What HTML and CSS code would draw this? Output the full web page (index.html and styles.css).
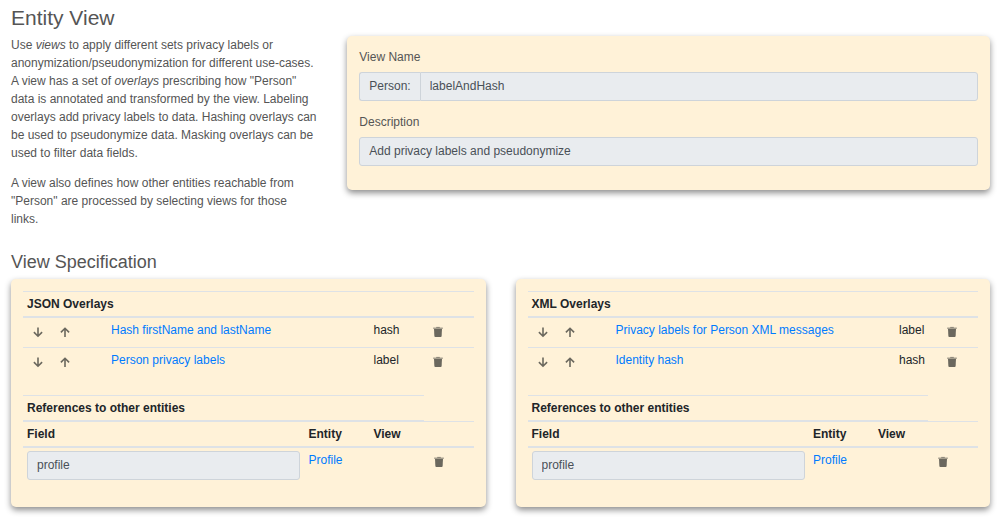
FILE: index.html
```
<!DOCTYPE html>
<html lang="en">
<head>
<meta charset="utf-8">
<meta name="viewport" content="width=device-width, initial-scale=1">
<title>Entity View</title>
<link rel="stylesheet" href="styles.css">
</head>
<body>
<svg class="sprite" aria-hidden="true">
  <symbol id="down" viewBox="0 0 12 12"><path d="M6 1.5V10M1.9 6.1L6 10.2L10.1 6.1" fill="none" stroke="currentColor" stroke-width="1.6"/></symbol>
  <symbol id="up" viewBox="0 0 12 12"><path d="M6 11V2.5M1.9 6.4L6 2.3L10.1 6.4" fill="none" stroke="currentColor" stroke-width="1.6"/></symbol>
  <symbol id="trash" viewBox="0 0 12 12"><path d="M4.2 .9h3.6v.9H4.2z" fill="currentColor" opacity=".8"/><path d="M1.2 1.5h9.6V3H1.2z" fill="currentColor" opacity=".6"/><path d="M2 3h8L9.6 10.2Q9.5 11 8.7 11H3.3Q2.5 11 2.4 10.2z" fill="currentColor"/></symbol>
</svg>
<main class="page">
  <h1>Entity View</h1>
  <section class="grid">
    <div class="intro">
      <p>Use <em>views</em> to apply different sets privacy labels or anonymization/pseudonymization for different use-cases. A view has a set of <em>overlays</em> prescribing how "Person" data is annotated and transformed by the view. Labeling overlays add privacy labels to data. Hashing overlays can be used to pseudonymize data. Masking overlays can be used to filter data fields.</p>
      <p>A view also defines how other entities reachable from "Person" are processed by selecting views for those links.</p>
    </div>
    <form class="card details">
      <div class="field">
        <label for="name">View Name</label>
        <div class="input-group">
          <span class="prefix">Person:</span>
          <input class="control" id="name" type="text" value="labelAndHash" readonly>
        </div>
      </div>
      <div class="field">
        <label for="description">Description</label>
        <input class="control" id="description" type="text" value="Add privacy labels and pseudonymize" readonly>
      </div>
    </form>
  </section>

  <h2>View Specification</h2>
  <section class="grid">
    <div class="card half">
      <table>
        <colgroup><col class="col-order"><col><col class="col-type"><col class="col-delete"></colgroup>
        <thead><tr><th colspan="4">JSON Overlays</th></tr></thead>
        <tbody>
          <tr>
            <td><div class="actions"><button type="button" aria-label="Move down"><svg><use href="#down"/></svg></button><button type="button" aria-label="Move up"><svg><use href="#up"/></svg></button></div></td>
            <td><a href="#hash-names">Hash firstName and lastName</a></td>
            <td>hash</td>
            <td><div class="actions"><button type="button" aria-label="Delete"><svg><use href="#trash"/></svg></button></div></td>
          </tr>
          <tr>
            <td><div class="actions"><button type="button" aria-label="Move down"><svg><use href="#down"/></svg></button><button type="button" aria-label="Move up"><svg><use href="#up"/></svg></button></div></td>
            <td><a href="#person-labels">Person privacy labels</a></td>
            <td>label</td>
            <td><div class="actions"><button type="button" aria-label="Delete"><svg><use href="#trash"/></svg></button></div></td>
          </tr>
        </tbody>
      </table>
      <table>
        <colgroup><col><col class="col-entity"><col class="col-view"><col class="col-remove"></colgroup>
        <thead>
          <tr><th colspan="3">References to other entities</th></tr>
          <tr><th id="json-field">Field</th><th>Entity</th><th>View</th><th></th></tr>
        </thead>
        <tbody>
          <tr>
            <td><input class="control" type="text" value="profile" aria-labelledby="json-field" readonly></td>
            <td><a href="#profile">Profile</a></td>
            <td></td>
            <td><div class="actions"><button type="button" aria-label="Delete"><svg><use href="#trash"/></svg></button></div></td>
          </tr>
        </tbody>
      </table>
    </div>
    <div class="card half">
      <table>
        <colgroup><col class="col-order"><col><col class="col-type-narrow"><col class="col-delete-narrow"></colgroup>
        <thead><tr><th colspan="4">XML Overlays</th></tr></thead>
        <tbody>
          <tr>
            <td><div class="actions"><button type="button" aria-label="Move down"><svg><use href="#down"/></svg></button><button type="button" aria-label="Move up"><svg><use href="#up"/></svg></button></div></td>
            <td><a href="#xml-labels">Privacy labels for Person XML messages</a></td>
            <td>label</td>
            <td><div class="actions"><button type="button" aria-label="Delete"><svg><use href="#trash"/></svg></button></div></td>
          </tr>
          <tr>
            <td><div class="actions"><button type="button" aria-label="Move down"><svg><use href="#down"/></svg></button><button type="button" aria-label="Move up"><svg><use href="#up"/></svg></button></div></td>
            <td><a href="#identity-hash">Identity hash</a></td>
            <td>hash</td>
            <td><div class="actions"><button type="button" aria-label="Delete"><svg><use href="#trash"/></svg></button></div></td>
          </tr>
        </tbody>
      </table>
      <table>
        <colgroup><col><col class="col-entity"><col class="col-view"><col class="col-remove"></colgroup>
        <thead>
          <tr><th colspan="3">References to other entities</th></tr>
          <tr><th id="xml-field">Field</th><th>Entity</th><th>View</th><th></th></tr>
        </thead>
        <tbody>
          <tr>
            <td><input class="control" type="text" value="profile" aria-labelledby="xml-field" readonly></td>
            <td><a href="#profile">Profile</a></td>
            <td></td>
            <td><div class="actions"><button type="button" aria-label="Delete"><svg><use href="#trash"/></svg></button></div></td>
          </tr>
        </tbody>
      </table>
    </div>
  </section>
</main>
</body>
</html>
```
FILE: styles.css
```
* { box-sizing: border-box; }

body {
  margin: 0;
  background: #fff;
  color: #555;
  font: 12px/18px "Liberation Sans", Arial, sans-serif;
}

.sprite { display: none; }

.page { padding: 5px 9px 10px 11px; }

h1, h2 { margin: 0 0 6px; font-weight: 400; }
h1 { font-size: 21px; line-height: 25px; }
h2 { margin-top: 11px; font-size: 18px; line-height: 22px; }

p { margin: 0 0 12px; }

.grid {
  display: grid;
  grid-template-columns: repeat(12, minmax(0, 1fr));
  column-gap: 30px;
  align-items: start;
}

.intro { grid-column: span 4; }
.details { grid-column: span 8; }
.half { grid-column: span 6; }

.card {
  padding: 12px;
  border-radius: 5px;
  background: #fff2d8;
  box-shadow: 0 3px 6px rgba(0, 0, 0, .45);
}

.field { margin-bottom: 12px; }

label { display: block; margin-bottom: 6px; }

.control, .prefix {
  height: 29px;
  padding: 4px 9px 5px;
  border: 1px solid #ced4da;
  border-radius: 3px;
  background: #e9ecef;
  color: #495057;
  font: inherit;
}

.control { display: block; width: 100%; min-width: 0; }

.input-group { display: flex; }

.prefix {
  border-right: 0;
  border-radius: 3px 0 0 3px;
}

.input-group .control {
  flex: 1;
  border-radius: 0 3px 3px 0;
}

table {
  width: 100%;
  margin-bottom: 18px;
  border-collapse: collapse;
  table-layout: fixed;
  color: #212529;
}

table:last-child { margin-bottom: 11px; }

th, td {
  padding: 3px 4px;
  border-top: 1px solid #dee2e6;
  text-align: left;
  vertical-align: top;
}

td { padding-bottom: 4px; }

th {
  border-bottom: 2px solid #dee2e6;
  font-weight: 700;
}

.col-order { width: 84px; }
.col-type { width: 54px; }
.col-delete { width: 50px; }
.col-type-narrow { width: 42px; }
.col-delete-narrow { width: 41px; }
.col-entity { width: 65px; }
.col-view { width: 54px; }
.col-remove { width: 50px; }

a { color: #007bff; text-decoration: none; }

.actions { display: flex; gap: 5px; }

button {
  display: flex;
  flex: none;
  align-items: center;
  justify-content: center;
  width: 22px;
  height: 22px;
  padding: 0;
  border: 0;
  background: none;
  color: #6b685e;
}

button svg { width: 12px; height: 12px; }
```
